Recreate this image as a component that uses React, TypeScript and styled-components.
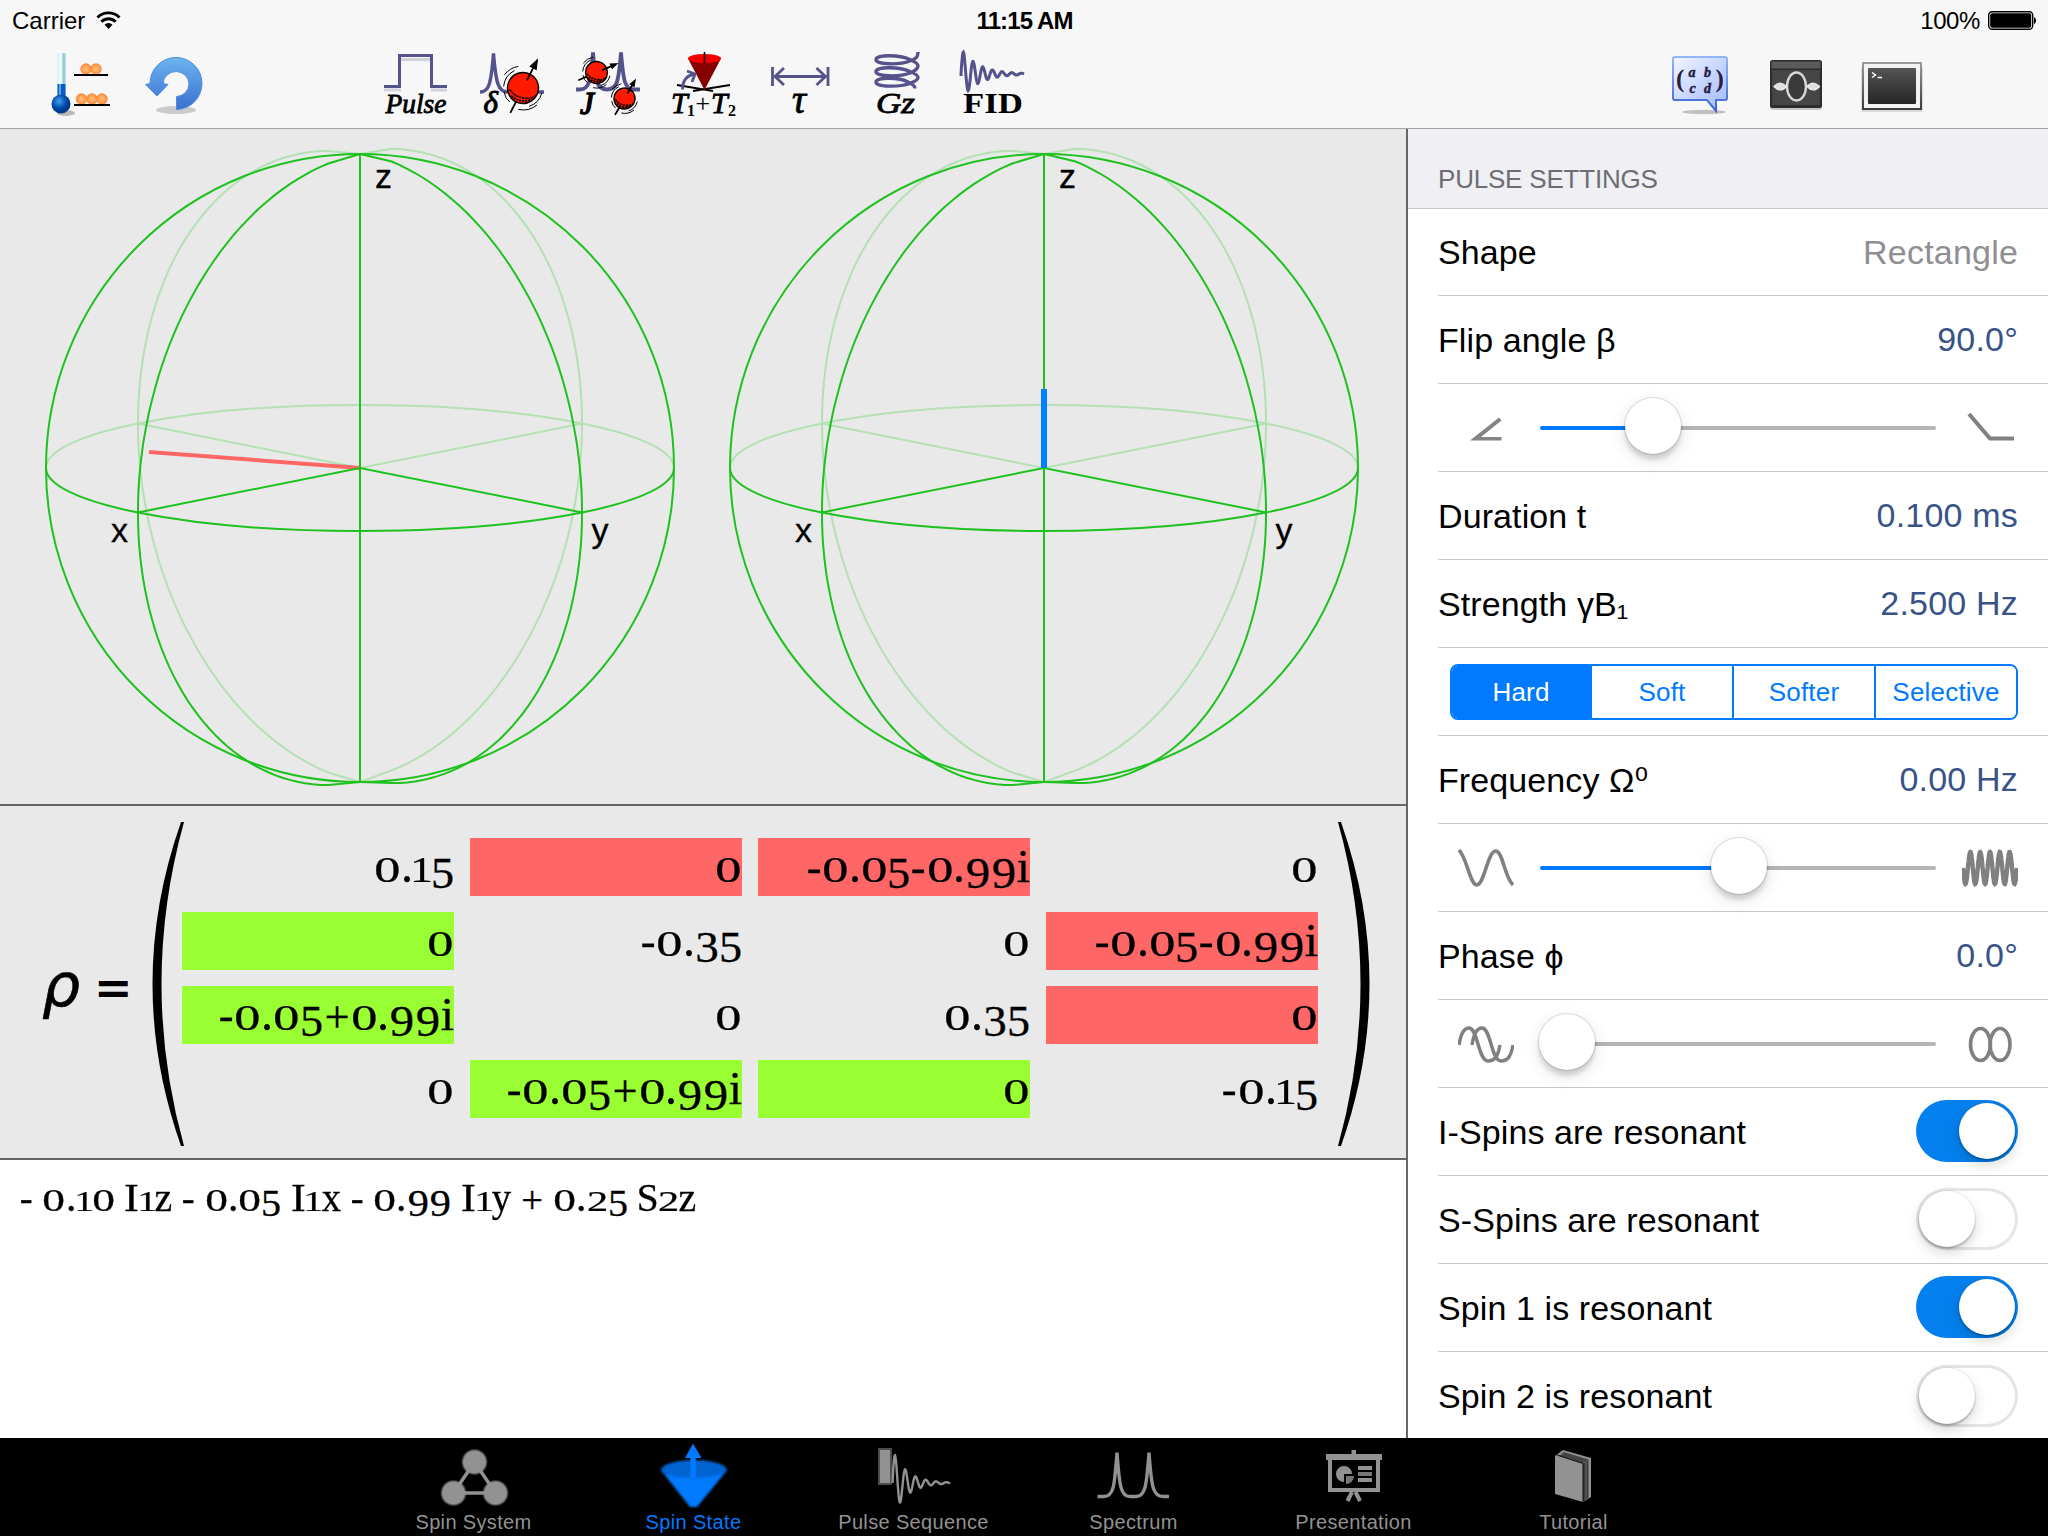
import React from "react";
import styled, { createGlobalStyle, css } from "styled-components";

const PURPLE = "#55528c";
const BLUE = "#007aff";
const GREY = "#929292";
const GREEN = "#1fc11f";
const PALE = "#b4e0b4";
const SERIF = `"Liberation Serif", "Times New Roman", serif`;
const SANS = `"Liberation Sans", Arial, "DejaVu Sans", sans-serif`;

const Global = createGlobalStyle`
  * { box-sizing: border-box; }
  body { margin: 0; background: #fff; }
`;

/* ---------- shell ---------- */

const Screen = styled.div`
  width: 2048px;
  height: 1536px;
  display: flex;
  flex-direction: column;
  overflow: hidden;
  background: #fff;
  color: #000;
  font-family: ${SANS};
`;

const Header = styled.header`
  height: 129px;
  flex: none;
  display: flex;
  flex-direction: column;
  background: #f7f7f7;
  border-bottom: 1px solid #a4a4a8;
`;

const StatusBar = styled.div`
  height: 40px;
  display: grid;
  grid-template-columns: 1fr auto 1fr;
  align-items: center;
  padding: 1px 11px 0 12px;
  font-size: 24px;
  line-height: 39px;
`;

const StatusSide = styled.div<{ $end?: boolean }>`
  display: flex;
  align-items: center;
  gap: ${(p) => (p.$end ? 8 : 11)}px;
  justify-content: ${(p) => (p.$end ? "flex-end" : "flex-start")};
`;

const Clock = styled.div`
  font-weight: 700;
  letter-spacing: -0.9px;
`;

const Percent = styled.span`
  letter-spacing: -0.4px;
`;

const Toolbar = styled.div`
  height: 88px;
  display: flex;
  justify-content: space-between;
  align-items: flex-start;
  padding: 10px 124px 0 48px;
`;

const ToolGroup = styled.div`
  display: flex;
  gap: 32px;
`;

const LeftTools = styled.div`
  display: flex;
  gap: 176px;
`;

const ToolSvg = styled.svg`
  width: 64px;
  height: 70px;
  display: block;
  overflow: visible;
`;

const Body = styled.main`
  flex: 1;
  min-height: 0;
  display: flex;
`;

const LeftPane = styled.section`
  width: 1406px;
  flex: none;
  display: flex;
  flex-direction: column;
`;

/* ---------- spheres ---------- */

const SphereArea = styled.div`
  height: 677px;
  flex: none;
  background: #e9e9e9;
  border-bottom: 2px solid #666;
`;

const SphereSvg = styled.svg`
  display: block;
`;

/* ---------- matrix ---------- */

const MatrixArea = styled.div`
  height: 354px;
  flex: none;
  display: flex;
  align-items: flex-start;
  background: #e9e9e9;
  border-bottom: 2px solid #666;
  padding: 16px 0 0 40px;
`;

const Rho = styled.div`
  width: 112px;
  height: 324px;
  display: flex;
  align-items: center;
  gap: 14px;
  padding: 2px 0 0 2px;
  font-family: "DejaVu Sans", sans-serif;
`;

const RhoGlyph = styled.span`
  font-size: 60px;
  font-style: oblique;
  line-height: 72px;
  -webkit-text-stroke: 0.6px #000;
`;

const Equals = styled.span`
  font-size: 46px;
  font-weight: 700;
  line-height: 72px;
  padding-top: 6px;
`;

const ParenSvg = styled.svg`
  width: 32px;
  height: 324px;
  flex: none;
`;

const Grid = styled.div`
  display: grid;
  grid-template-columns: repeat(4, 272px);
  grid-auto-rows: 58px;
  gap: 16px;
  margin: 16px 20px 0 -2px;
`;

const tones = { red: "#ff6666", green: "#99ff33", none: "transparent" };
type Tone = keyof typeof tones;

const Cell = styled.div<{ $tone: Tone }>`
  background: ${(p) => tones[p.$tone]};
  display: flex;
  justify-content: flex-end;
  align-items: flex-start;
  padding: 8px 0 0 0;
  white-space: pre;
  font: 43.6px/1 ${SERIF};
`;

const Glyph = styled.span<{ $w: number; $sx: number; $sy: number; $dy: number }>`
  display: inline-flex;
  justify-content: center;
  width: ${(p) => p.$w}em;
  white-space: pre;
  transform-origin: 50% 0.8375em;
  transform: translateY(${(p) => p.$dy}em) scale(${(p) => p.$sx}, ${(p) => p.$sy});
  -webkit-text-stroke: 0.3px #000;
`;

const FormulaArea = styled.div`
  flex: 1;
  background: #fff;
  padding: 20px 0 0 19px;
  white-space: pre;
  font: 37.9px/1 ${SERIF};
`;

/* advance width, horizontal scale, vertical scale, drop below the baseline */
const METRICS: Record<string, [number, number, number, number]> = {
  "0": [0.614, 1.2, 0.82, 0],
  "1": [0.429, 1.05, 0.8, 0],
  "2": [0.559, 1.12, 0.8, 0],
  "3": [0.551, 1.08, 1.02, 0.14],
  "5": [0.528, 1.06, 1.02, 0.14],
  "9": [0.597, 1.12, 1.02, 0.14],
  ".": [0.27, 1.1, 1.1, 0],
  "-": [0.374, 1.02, 1.0, 0],
  "+": [0.643, 1.02, 1.02, 0.04],
  i: [0.293, 1.1, 1.08, 0],
  I: [0.39, 1.17, 1.05, 0],
  S: [0.561, 1.04, 1.05, 0],
  x: [0.504, 1.02, 1.06, 0],
  y: [0.493, 1.02, 1.06, 0],
  z: [0.443, 1.05, 1.06, 0],
  " ": [0.241, 1, 1, 0],
};

const OldStyle = ({ children }: { children: string }) => (
  <span>
    {children.split("").map((c, i) => {
      const [w, sx, sy, dy] = METRICS[c] ?? [0.5, 1, 1, 0];
      return (
        <Glyph key={i} $w={w} $sx={sx} $sy={sy} $dy={dy}>
          {c}
        </Glyph>
      );
    })}
  </span>
);

/* ---------- settings ---------- */

const Settings = styled.aside`
  flex: 1;
  background: #fff;
  border-left: 2px solid #666;
  display: flex;
  flex-direction: column;
  overflow: hidden;
`;

const SectionTitle = styled.h2`
  margin: 0;
  height: 80px;
  flex: none;
  background: #efeff4;
  border-bottom: 1px solid #c8c7cc;
  padding: 35px 0 0 30px;
  font-size: 26px;
  line-height: 30px;
  font-weight: 400;
  letter-spacing: -0.2px;
  color: #6d6d72;
`;

const Row = styled.div<{ $first?: boolean }>`
  height: ${(p) => (p.$first ? 87 : 88)}px;
  flex: none;
  margin-left: 30px;
  padding-right: 30px;
  border-bottom: 1px solid #c8c7cc;
  display: flex;
  align-items: center;
  justify-content: space-between;
  font-size: 34px;
  letter-spacing: 0.1px;
  &:last-child { border-bottom: 0; }
`;

const RowLabel = styled.span`
  white-space: nowrap;
  padding-top: 1px;
`;

const RowValue = styled.span<{ $muted?: boolean }>`
  color: ${(p) => (p.$muted ? "#8e8e93" : "#385487")};
  letter-spacing: 0.2px;
  white-space: nowrap;
`;

const SliderRow = styled(Row)`
  padding-left: 20px;
`;

const SliderIcon = styled.svg`
  width: 56px;
  height: 56px;
  flex: none;
`;

const Track = styled.div<{ $at: number }>`
  width: 396px;
  height: 4px;
  border-radius: 2px;
  background: linear-gradient(90deg, ${BLUE} ${(p) => p.$at}px, #b4b4b4 ${(p) => p.$at}px);
  display: flex;
  align-items: center;
`;

const Thumb = styled.div<{ $at: number }>`
  width: 56px;
  height: 56px;
  flex: none;
  border-radius: 50%;
  background: #fff;
  margin: -4px 0 0 ${(p) => p.$at - 28}px;
  box-shadow: 0 0 1px 1px rgba(0, 0, 0, 0.13), 0 6px 4px rgba(0, 0, 0, 0.12), 0 6px 18px rgba(0, 0, 0, 0.12);
`;

const Segments = styled.div`
  width: 568px;
  height: 56px;
  margin-left: 12px;
  display: grid;
  grid-template-columns: 138px repeat(3, 142px);
  border: 2px solid ${BLUE};
  border-radius: 8px;
  overflow: hidden;
`;

const Segment = styled.div<{ $on?: boolean }>`
  display: flex;
  align-items: center;
  justify-content: center;
  padding-top: 1px;
  font-size: 26px;
  letter-spacing: 0.2px;
  color: ${(p) => (p.$on ? "#fff" : BLUE)};
  background: ${(p) => (p.$on ? BLUE : "#fff")};
  & + & { border-left: 2px solid ${BLUE}; }
`;

const Switch = styled.div<{ $on: boolean }>`
  width: 102px;
  height: 62px;
  margin-bottom: 1px;
  border-radius: 31px;
  display: flex;
  align-items: center;
  padding: 0 3px;
  justify-content: ${(p) => (p.$on ? "flex-end" : "flex-start")};
  ${(p) =>
    p.$on
      ? css`background: #0480ee;`
      : css`background: #fff; box-shadow: inset 0 0 0 3px #e5e5e5;`}
`;

const Knob = styled.div`
  width: 56px;
  height: 56px;
  border-radius: 50%;
  background: #fff;
  box-shadow: 0 2px 2px rgba(0, 0, 0, 0.22), 0 6px 14px rgba(0, 0, 0, 0.16), 0 0 1px 1px rgba(0, 0, 0, 0.05);
`;

/* ---------- tab bar ---------- */

const TabBar = styled.nav`
  height: 98px;
  flex: none;
  background: #000;
  display: flex;
  justify-content: center;
  gap: 68px;
`;

const Tab = styled.div<{ $active?: boolean }>`
  width: 152px;
  display: flex;
  flex-direction: column;
  align-items: center;
  color: ${(p) => (p.$active ? BLUE : GREY)};
  font-size: 20px;
  line-height: 24px;
  letter-spacing: 0.35px;
  white-space: nowrap;
  padding-right: 1px;
`;

const TabSvg = styled.svg`
  width: 80px;
  height: 70px;
  margin: 2px 0 0;
  overflow: visible;
`;

/* ---------- drawing helpers ---------- */

const decay = (x0: number, x1: number, mid: number, amp: number, cycles: number, k: number) => {
  const n = 160;
  let d = "";
  for (let i = 0; i <= n; i++) {
    const t = i / n;
    const y = mid - amp * Math.exp(-k * t) * Math.sin(2 * Math.PI * cycles * t);
    d += `${i ? "L" : "M"}${(x0 + (x1 - x0) * t).toFixed(1)} ${y.toFixed(1)}`;
  }
  return d;
};

const R = 314;
const meridian = (cx: number, cy: number, side: number, front: number) => {
  const a = R / Math.SQRT2;
  const b = a * 0.2;
  let d = `M${cx} ${cy - R}`;
  for (let deg = 81.8; deg >= -81.9; deg -= 2.045) {
    const t = (deg * Math.PI) / 180;
    const x = cx + side * front * a * Math.cos(t);
    const lift = side * front > 0 ? 2.4 * (1 - Math.cos(t)) : 0;
    const y = cy + front * b * Math.cos(t) - R * Math.sin(t) - lift;
    d += `L${x.toFixed(1)} ${y.toFixed(1)}`;
  }
  return d + `L${cx} ${cy + R}`;
};

const Sphere = ({ cx, vector }: { cx: number; vector: React.ReactNode }) => {
  const cy = 339;
  const a = 222;
  const b = 44.4;
  return (
    <g fill="none" stroke={GREEN} strokeWidth="2">
      <g stroke={PALE}>
        <path d={meridian(cx, cy, -1, -1)} />
        <path d={meridian(cx, cy, 1, -1)} />
        <path d={`M${cx - R} ${cy}A${R} 63 0 0 1 ${cx + R} ${cy}`} />
        <path d={`M${cx - a} ${cy - b}L${cx} ${cy}L${cx + a} ${cy - b}`} />
      </g>
      {vector}
      <circle cx={cx} cy={cy} r={R} />
      <path d={meridian(cx, cy, -1, 1)} />
      <path d={meridian(cx, cy, 1, 1)} />
      <path d={`M${cx - R} ${cy}A${R} 63 0 0 0 ${cx + R} ${cy}`} />
      <path d={`M${cx - a} ${cy + b}L${cx} ${cy}L${cx + a} ${cy + b}`} />
      <g fill="#000" stroke="#000" strokeWidth="0.3" fontFamily={SANS} fontSize="34">
        <text x={cx + 15} y="59">z</text>
        <text x={cx - 249} y="413">x</text>
        <text x={cx + 231.5} y="413">y</text>
      </g>
    </g>
  );
};

const Ball = ({ x, y, r, angle }: { x: number; y: number; r: number; angle: number }) => (
  <g transform={`translate(${x} ${y}) rotate(${angle})`} stroke="#000" fill="none">
    <path d={`M0 ${r * 1.8}V${r * 0.8}`} strokeWidth="1.8" />
    <circle r={r} fill="#ff1a00" strokeWidth="1.4" />
    <path d={`M0 ${-r * 0.55}V${-r * 1.6}`} strokeWidth="1.8" />
    <path d={`M0 ${-r * 2.05}l${-r * 0.22} ${r * 0.6}h${r * 0.44}z`} fill="#000" strokeWidth="1" />
    <g transform={`rotate(${-angle})`}>
      <path
        d={`M${-r * 0.85} ${r * 0.1}Q${-r * 0.5} ${r * 0.6} ${r * 0.1} ${r * 0.65}T${r * 0.85} ${r * 0.45}M${-r * 0.75} ${r * 0.5}Q${-r * 0.2} ${r} ${r * 0.55} ${r * 0.75}`}
        strokeWidth="1.6"
        strokeDasharray="2.2 0.8"
      />
      <path
        d={`M${-r * 1.25} ${-r * 0.1}A${r * 1.25} ${r * 1.25} 0 0 1 ${-r * 0.55} ${-r * 1.12}M${-r * 1.2} ${-r * 0.85}A${r * 1.5} ${r * 1.5} 0 0 1 ${-r * 0.3} ${-r * 1.4}M${r * 1.22} ${r * 0.3}A${r * 1.24} ${r * 1.24} 0 0 1 ${r * 0.4} ${r * 1.18}M${r * 0.9} ${r * 1.1}A${r * 1.4} ${r * 1.4} 0 0 1 ${-r * 0.3} ${r * 1.38}M${-r * 1.22} ${r * 0.25}Q${-r * 1.15} ${r * 0.7} ${-r * 0.85} ${r * 0.9}`}
        strokeWidth="1"
      />
    </g>
  </g>
);

/* ---------- toolbar icons (64 x 70 boxes) ---------- */

const icoText = { fontFamily: SERIF, fontWeight: 700, fill: "#000" } as const;
const icoMath = {
  fontFamily: SERIF,
  fontStyle: "italic",
  fill: "#000",
  stroke: "#000",
  strokeWidth: 0.8,
} as const;

const Thermometer = () => (
  <ToolSvg viewBox="48 50 64 70">
    <defs>
      <radialGradient id="bulb" cx="0.4" cy="0.35">
        <stop offset="0" stopColor="#3ea0f0" />
        <stop offset="0.7" stopColor="#0450b0" />
        <stop offset="1" stopColor="#023a90" />
      </radialGradient>
      <linearGradient id="tube">
        <stop offset="0" stopColor="#d4eef2" />
        <stop offset="0.45" stopColor="#f2fcfd" />
        <stop offset="0.75" stopColor="#8cc4ce" />
        <stop offset="1" stopColor="#c8e4e8" />
      </linearGradient>
      <radialGradient id="atom">
        <stop offset="0" stopColor="#ffc080" />
        <stop offset="1" stopColor="#fb8a35" />
      </radialGradient>
    </defs>
    <ellipse cx="66" cy="113" rx="9" ry="3" fill="#000" opacity="0.25" />
    <rect x="57" y="53" width="9" height="45" fill="url(#tube)" />
    <rect x="57.500" y="84" width="8" height="16" fill="#0a5cc0" />
    <rect x="59" y="84" width="2" height="16" fill="#56a8ee" />
    <circle cx="61" cy="104" r="9.500" fill="url(#bulb)" />
    {[[86, 69], [96, 69], [81.5, 99], [92, 99], [102, 99]].map(([x, y]) => (
      <circle key={`${x}-${y}`} cx={x} cy={y} r="5.700" fill="url(#atom)" />
    ))}
    <path d="M74 75h34M74 105h36" stroke="#000" strokeWidth="2.200" />
  </ToolSvg>
);

const Undo = () => (
  <ToolSvg viewBox="144 50 64 70">
    <defs>
      <linearGradient id="undo" x1="0" y1="0" x2="0" y2="1">
        <stop offset="0" stopColor="#6cb4ee" />
        <stop offset="1" stopColor="#3c6fd2" />
      </linearGradient>
    </defs>
    <ellipse cx="176" cy="110" rx="20" ry="4" fill="#000" opacity="0.18" />
    <path
      d="M176.500 109.500A26 26 0 1 0 150 83.500L145.500 84.500L157 96L168 84.500L163 83.500A13 12.500 0 1 1 176.500 96.500Z"
      fill="url(#undo)"
      stroke="#4b8ede"
      strokeWidth="1"
    />
  </ToolSvg>
);

const Pulse = () => (
  <ToolSvg viewBox="384 50 64 70">
    <path d="M384 90h17M401 59.500h29M431 90h16" stroke={PURPLE} strokeWidth="3" opacity="0.22" />
    <path d="M384 86.500h15.500v-31h32v31h15.500" fill="none" stroke={PURPLE} strokeWidth="3" />
    <text x="385.500" y="113" fontSize="27" textLength="61" lengthAdjust="spacingAndGlyphs" {...icoMath}>Pulse</text>
  </ToolSvg>
);

const Delta = () => (
  <ToolSvg viewBox="480 50 64 70">
    <path d="M480 92c9 0 11-8 13.500-38.500c2.500 30.500 5 38.500 14 38.500h36.500" fill="none" stroke={PURPLE} strokeWidth="3.400" />
    <text x="483.500" y="113" fontSize="31" {...icoMath} strokeWidth="1">δ</text>
    <Ball x={523} y={88} r={15.5} angle={27} />
  </ToolSvg>
);

const Coupling = () => (
  <ToolSvg viewBox="576 50 64 70">
    <path
      d="M576 89.500h4c9 0 10.500-7 13-37c2.500 30 4 37 14 37s11.500-7 14-37c2.500 30 4 37 13 37h6"
      fill="none"
      stroke={PURPLE}
      strokeWidth="3.800"
    />
    <text x="580" y="114" fontSize="31" {...icoMath} strokeWidth="1.400">J</text>
    <Ball x={596.5} y={72.500} r={11} angle={67} />
    <Ball x={624.5} y={98.500} r={10.5} angle={30} />
  </ToolSvg>
);

const Relaxation = () => (
  <ToolSvg viewBox="672 50 64 70">
    <path d="M677 85l36 6M730 85l-37 6" stroke="#000" strokeWidth="1.800" />
    <path d="M688 58.500L704.500 90L721 58.500z" fill="#860000" />
    <ellipse cx="704.500" cy="58.500" rx="16.500" ry="4.500" fill="#f50000" />
    <path d="M704.500 52v11" stroke="#000" strokeWidth="1.600" />
    <path d="M682.500 89.500c0-8 4-14 12-15.500M687 71l8 3l-3 8" fill="none" stroke={PURPLE} strokeWidth="2.800" />
    <text x="671" y="113" fontSize="30" {...icoMath}>T</text>
    <text x="711" y="113" fontSize="30" {...icoMath}>T</text>
    <g {...icoText}>
      <text x="687" y="115.500" fontSize="16">1</text>
      <text x="728" y="115.500" fontSize="16">2</text>
      <text x="695.500" y="112" fontSize="26" fontWeight="400">+</text>
    </g>
  </ToolSvg>
);

const Delay = () => (
  <ToolSvg viewBox="768 50 64 70">
    <path d="M772.500 67v19M828 67v19M776 76.500h49M784 68l-9 8.500l9 8.500M816.500 68l9 8.500l-9 8.500" fill="none" stroke={PURPLE} strokeWidth="2.800" />
    <text x="792" y="113" fontSize="39" {...icoMath}>τ</text>
  </ToolSvg>
);

const Gradient = () => (
  <ToolSvg viewBox="864 50 64 70">
    <g fill="none" stroke={PURPLE} strokeWidth="3.400">
      <path d="M918 52c0 5-2 7-8 9c-10 4-34 4-34-1.500s24-4.500 34 0c6 2.500 8 4.500 8 6.500s-3 5-8 7c-10 4-34 4-34-1.500s24-4.500 34 0c6 2.500 8 4 8 6s-3 4-8 6c-10 3.500-34 4-34-1.500s24-4.500 32 0c5 2 7 3.500 7 6.500" />
    </g>
    <text x="876" y="113" fontSize="29" textLength="39" lengthAdjust="spacingAndGlyphs" {...icoMath}>Gz</text>
  </ToolSvg>
);

const Fid = () => (
  <ToolSvg viewBox="960 50 64 70">
    <path d={`M961 76${decay(961, 1024, 74, 25, 6.5, 3.6).replace("M", "L")}`} fill="none" stroke={PURPLE} strokeWidth="3" />
    <text x="963" y="113" fontSize="30" textLength="60" lengthAdjust="spacingAndGlyphs" {...icoText}>FID</text>
  </ToolSvg>
);

const MatrixBubble = () => (
  <ToolSvg viewBox="1668 50 64 70">
    <defs>
      <linearGradient id="bub" x1="0" y1="0" x2="1" y2="1">
        <stop offset="0" stopColor="#f4f6ff" />
        <stop offset="0.6" stopColor="#bfd0ff" />
        <stop offset="1" stopColor="#a4baff" />
      </linearGradient>
      <linearGradient id="bubEdge" x1="0" y1="0" x2="0" y2="1">
        <stop offset="0" stopColor="#93b6f8" />
        <stop offset="1" stopColor="#3c62d4" />
      </linearGradient>
    </defs>
    <ellipse cx="1704" cy="112" rx="22" ry="2.200" fill="#000" opacity="0.22" />
    <path d="M1675 57h50a2 2 0 0 1 2 2v39a2 2 0 0 1-2 2h-9v11l-9-11h-32a2 2 0 0 1-2-2v-39a2 2 0 0 1 2-2z" fill="url(#bub)" stroke="url(#bubEdge)" strokeWidth="2" />
    <g fontFamily={SERIF} fontWeight="700" fill="#2a1c40">
      <text x="1676" y="86.500" fontSize="25">(</text>
      <text x="1715.500" y="86.500" fontSize="25">)</text>
      <g fontSize="14" fontStyle="italic" stroke="#2a1c40" strokeWidth="0.5">
        <text x="1688.500" y="77">a</text>
        <text x="1704" y="77">b</text>
        <text x="1689.500" y="92.500">c</text>
        <text x="1704" y="92.500">d</text>
      </g>
    </g>
  </ToolSvg>
);

const EchoIcon = () => (
  <ToolSvg viewBox="1764 50 64 70">
    <rect x="1770" y="62" width="52" height="48" rx="3" fill="#000" opacity="0.2" />
    <rect x="1770" y="60" width="52" height="48" rx="2.500" fill="#2c2c2c" />
    <rect x="1771.500" y="61.500" width="49" height="7" fill="#5a5a5a" />
    <rect x="1772" y="70" width="48" height="35" fill="#464646" />
    <ellipse cx="1796.500" cy="86.500" rx="9.500" ry="14" fill="#3a3a3a" stroke="#d8d8d8" strokeWidth="2.400" />
    <path d="M1774 86.500q6-7 12.500 0q-6 7-12.500 0zM1807 86.500q6-7 12.500 0q-6 7-12.500 0z" fill="#e0e0e0" stroke="#eee" strokeWidth="1.200" />
  </ToolSvg>
);

const Terminal = () => (
  <ToolSvg viewBox="1860 50 64 70">
    <defs>
      <linearGradient id="term" x1="0" y1="0" x2="0" y2="1">
        <stop offset="0" stopColor="#555" />
        <stop offset="1" stopColor="#262626" />
      </linearGradient>
      <linearGradient id="termEdge" x1="0" y1="0" x2="0" y2="1">
        <stop offset="0" stopColor="#9a9a9a" />
        <stop offset="1" stopColor="#3c3c3c" />
      </linearGradient>
    </defs>
    <rect x="1861" y="66" width="62" height="46" rx="2" fill="#000" opacity="0.12" />
    <rect x="1863" y="63" width="58" height="46" fill="#f2f2f2" stroke="url(#termEdge)" strokeWidth="2" />
    <rect x="1868" y="68" width="48" height="36" rx="1" fill="url(#term)" />
    <path d="M1872 72.500l3.500 2.500l-3.500 2.500M1877.500 77.500h4.500" fill="none" stroke="#fff" strokeWidth="1.500" />
  </ToolSvg>
);

/* ---------- tab icons (80 x 70 boxes) ---------- */

const SystemTab = () => (
  <TabSvg viewBox="434 1440 80 70">
    <defs>
      <radialGradient id="fuzzy">
        <stop offset="0.8" stopColor={GREY} />
        <stop offset="1" stopColor={GREY} stopOpacity="0" />
      </radialGradient>
    </defs>
    <path d="M474.500 1462L453.500 1493H495.500Z" fill="none" stroke={GREY} strokeWidth="3.500" />
    {[[474.5, 1462], [453.5, 1493], [495.5, 1493]].map(([x, y]) => (
      <circle key={x} cx={x} cy={y} r="13.500" fill="url(#fuzzy)" />
    ))}
  </TabSvg>
);

const StateTab = () => (
  <TabSvg viewBox="654 1440 80 70">
    <defs>
      <filter id="soft" x="-10%" y="-10%" width="120%" height="120%">
        <feGaussianBlur stdDeviation="1" />
      </filter>
    </defs>
    <g filter="url(#soft)">
      <ellipse cx="694" cy="1470" rx="33" ry="10" fill="#0064d2" />
      <path d="M664 1474Q694 1482 724 1474L697 1507H690Z" fill={BLUE} />
    </g>
    <path d="M693 1478v-22" stroke={BLUE} strokeWidth="5.500" />
    <path d="M693 1443.500L701.500 1458H685Z" fill={BLUE} />
  </TabSvg>
);

const SequenceTab = () => (
  <TabSvg viewBox="874 1440 80 70">
    <rect x="879" y="1449" width="12" height="35" fill={GREY} stroke="#4c4c4c" strokeWidth="2" />
    <path d={decay(892.5, 950, 1483, 33, 5.6, 4)} fill="none" stroke={GREY} strokeWidth="2.400" />
  </TabSvg>
);

const SpectrumTab = () => (
  <TabSvg viewBox="1094 1440 80 70">
    <path
      d="M1097.500 1496.500h6c10 0 11-9 13.500-44c2.500 35 4 44 13 44h6c9 0 10.500-9 13-44c2.500 35 4 44 14 44h6"
      fill="none"
      stroke={GREY}
      strokeWidth="3.400"
    />
  </TabSvg>
);

const PresentationTab = () => (
  <TabSvg viewBox="1314 1440 80 70">
    <g fill={GREY}>
      <rect x="1351.500" y="1450" width="4.500" height="5" />
      <rect x="1326" y="1454" width="56" height="6" />
      <path d="M1328 1458h52v34h-52zM1332 1460v28h44v-28z" fillRule="evenodd" />
      <path d="M1344 1466a8 8 0 1 0 0 16v-8h8a8 8 0 0 0-8-8z" />
      <path d="M1346 1476h8a8 8 0 0 1-8 8z" fill="#777" />
      <rect x="1358" y="1466" width="14" height="4" />
      <rect x="1358" y="1472" width="14" height="4" fill="#777" />
      <rect x="1358" y="1478" width="14" height="4" />
    </g>
    <path d="M1352 1492l-4.500 9M1355.500 1492l4.500 9" stroke={GREY} strokeWidth="4" />
  </TabSvg>
);

const TutorialTab = () => (
  <TabSvg viewBox="1534 1440 80 70">
    <path d="M1555 1456l8-6l28 8v39l-8 5l-28-8z" fill={GREY} />
    <path d="M1559 1456l5-4l24.500 7.500l-5.500 4z" fill="#444" />
    <path d="M1583 1464l5.500-4.500v38.500l-5.500 4z" fill="#3a3a3a" />
    <path d="M1557 1455l26 8.500v38.500" fill="none" stroke="#111" strokeWidth="1" />
    <path d="M1586 1462v38" stroke="#666" strokeWidth="1" />
  </TabSvg>
);

/* ---------- slider end icons ---------- */

const sliderStroke = { fill: "none", stroke: "#808080", strokeWidth: 4 } as const;

const NarrowAngle = () => (
  <SliderIcon viewBox="0 0 56 56">
    <path d="M12 40.500L41 17.500L43.500 20.500L23 37H43.500V40.500Z" fill="#848484" />
  </SliderIcon>
);
const WideAngle = () => (
  <SliderIcon viewBox="0 0 56 56"><path d="M7 14L28 38.500H52" {...sliderStroke} /></SliderIcon>
);
const SlowWave = () => (
  <SliderIcon viewBox="0 0 56 56"><path d="M1 10C9 18 12 45 19 45S30 11 37.500 11S46 36 55 45" {...sliderStroke} strokeWidth="3.600" /></SliderIcon>
);
const FastWave = () => {
  const pts = Array.from({ length: 201 }, (_, i) => `${(1 + i * 0.27).toFixed(1)},${(28 + 16 * Math.sin((i / 200) * Math.PI * 11)).toFixed(1)}`);
  return <SliderIcon viewBox="0 0 56 56"><polyline points={pts.join(" ")} {...sliderStroke} strokeWidth="4.400" /></SliderIcon>;
};
const ShiftedWaves = () => (
  <SliderIcon viewBox="0 0 56 56">
    <path d="M1 29C3 16 7 12 11 12C20 12 20 45 30 45C37 45 40 40 42 29M14 29C16 16 20 12 24 12C33 12 33 45 43 45C50 45 53 40 55 29" {...sliderStroke} strokeWidth="3.500" />
  </SliderIcon>
);
const OpposedWaves = () => (
  <SliderIcon viewBox="0 0 56 56">
    <ellipse cx="18.500" cy="28.500" rx="10" ry="16" {...sliderStroke} strokeWidth="3.600" />
    <ellipse cx="38" cy="28.500" rx="10" ry="16" {...sliderStroke} strokeWidth="3.600" />
  </SliderIcon>
);

const Slider = ({ at, min, max }: { at: number; min: React.ReactNode; max: React.ReactNode }) => (
  <SliderRow>
    {min}
    <Track $at={at}><Thumb $at={at} /></Track>
    {max}
  </SliderRow>
);

const Field = ({ label, value, muted, first }: { label: string; value: string; muted?: boolean; first?: boolean }) => (
  <Row $first={first}>
    <RowLabel>{label}</RowLabel>
    <RowValue $muted={muted}>{value}</RowValue>
  </Row>
);

const Toggle = ({ label, on }: { label: string; on: boolean }) => (
  <Row>
    <RowLabel>{label}</RowLabel>
    <Switch $on={on}><Knob /></Switch>
  </Row>
);

const CELLS: [string, Tone][] = [
  ["0.15", "none"], ["0", "red"], ["-0.05-0.99i", "red"], ["0", "none"],
  ["0", "green"], ["-0.35", "none"], ["0", "none"], ["-0.05-0.99i", "red"],
  ["-0.05+0.99i", "green"], ["0", "none"], ["0.35", "none"], ["0", "red"],
  ["0", "none"], ["-0.05+0.99i", "green"], ["0", "green"], ["-0.15", "none"],
];

const TABS: [string, React.FC][] = [
  ["Spin System", SystemTab],
  ["Spin State", StateTab],
  ["Pulse Sequence", SequenceTab],
  ["Spectrum", SpectrumTab],
  ["Presentation", PresentationTab],
  ["Tutorial", TutorialTab],
];

export default function App() {
  return (
    <Screen>
      <Global />
      <Header>
        <StatusBar>
          <StatusSide>
            <span>Carrier</span>
            <svg width="25" height="19" viewBox="0 0 25 19" fill="none" stroke="#000" strokeWidth="2.900">
              <path d="M1.500 6.500a15.500 15.500 0 0 1 22 0M5.300 10.800a10 10 0 0 1 14.400 0" />
              <path d="M12.500 18l-4-4.300a5.800 5.800 0 0 1 8 0z" fill="#000" stroke="none" />
            </svg>
          </StatusSide>
          <Clock>11:15 AM</Clock>
          <StatusSide $end>
            <Percent>100%</Percent>
            <svg width="49" height="19" viewBox="0 0 49 19">
              <rect x="0.700" y="0.700" width="44" height="17.600" rx="3.500" fill="none" stroke="#000" strokeWidth="1.400" />
              <rect x="2.200" y="2.200" width="41" height="14.600" rx="2" />
              <path d="M46 6a4 4 0 0 1 0 7z" />
            </svg>
          </StatusSide>
        </StatusBar>
        <Toolbar>
          <LeftTools>
            <ToolGroup><Thermometer /><Undo /></ToolGroup>
            <ToolGroup>
              <Pulse /><Delta /><Coupling /><Relaxation /><Delay /><Gradient /><Fid />
            </ToolGroup>
          </LeftTools>
          <ToolGroup><MatrixBubble /><EchoIcon /><Terminal /></ToolGroup>
        </Toolbar>
      </Header>
      <Body>
        <LeftPane>
          <SphereArea>
            <SphereSvg width="1406" height="675" viewBox="0 0 1406 675">
              <Sphere cx={360} vector={<path d="M149 323L360 339" stroke="#ff6666" strokeWidth="4" />} />
              <Sphere cx={1044} vector={null} />
              <path d="M360 25v628M1044 25v628" stroke={GREEN} strokeWidth="2" />
              <path d="M1044 339v-79" stroke="#0080ff" strokeWidth="6" />
            </SphereSvg>
          </SphereArea>
          <MatrixArea>
            <Rho><RhoGlyph>ρ</RhoGlyph><Equals>=</Equals></Rho>
            <ParenSvg viewBox="0 0 32 324"><path d="M29 0Q-28 162 29 324H32Q-13 162 32 0Z" /></ParenSvg>
            <Grid>
              {CELLS.map(([text, tone], i) => (
                <Cell key={i} $tone={tone}><OldStyle>{text}</OldStyle></Cell>
              ))}
            </Grid>
            <ParenSvg viewBox="0 0 32 324"><path d="M3 0Q60 162 3 324H0Q45 162 0 0Z" /></ParenSvg>
          </MatrixArea>
          <FormulaArea><OldStyle>- 0.10 I1z - 0.05 I1x - 0.99 I1y + 0.25 S2z</OldStyle></FormulaArea>
        </LeftPane>
        <Settings>
          <SectionTitle>PULSE SETTINGS</SectionTitle>
          <Field first label="Shape" value="Rectangle" muted />
          <Field label="Flip angle β" value="90.0°" />
          <Slider at={113} min={<NarrowAngle />} max={<WideAngle />} />
          <Field label="Duration t" value="0.100 ms" />
          <Field label="Strength γB₁" value="2.500 Hz" />
          <Row>
            <Segments>
              <Segment $on>Hard</Segment>
              <Segment>Soft</Segment>
              <Segment>Softer</Segment>
              <Segment>Selective</Segment>
            </Segments>
          </Row>
          <Field label="Frequency Ω⁰" value="0.00 Hz" />
          <Slider at={199} min={<SlowWave />} max={<FastWave />} />
          <Field label="Phase ϕ" value="0.0°" />
          <Slider at={27} min={<ShiftedWaves />} max={<OpposedWaves />} />
          <Toggle label="I-Spins are resonant" on />
          <Toggle label="S-Spins are resonant" on={false} />
          <Toggle label="Spin 1 is resonant" on />
          <Toggle label="Spin 2 is resonant" on={false} />
        </Settings>
      </Body>
      <TabBar>
        {TABS.map(([label, Icon]) => (
          <Tab key={label} $active={label === "Spin State"}>
            <Icon />
            <span>{label}</span>
          </Tab>
        ))}
      </TabBar>
    </Screen>
  );
}
